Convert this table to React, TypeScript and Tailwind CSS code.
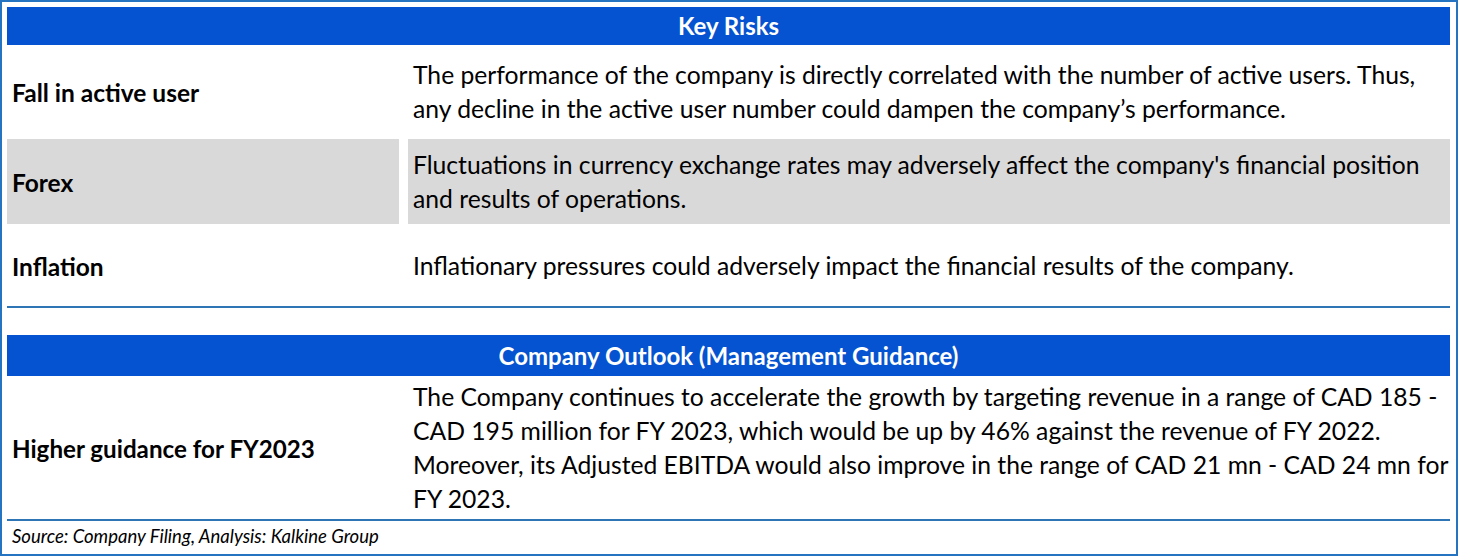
import React from "react";

const font = { fontFamily: "Lato, 'Open Sans', sans-serif" };

function Header({ title, h }: { title: string; h: string }) {
  return (
    <div className={`${h} bg-[#0553d0] text-white font-bold text-[24px] flex items-center justify-center leading-none`}>
      {title}
    </div>
  );
}

export default function App() {
  return (
    <div style={font} className="w-[1458px] h-[556px] border-2 border-[#2474c2] bg-white pt-[5px] pl-[5px] pr-[6px] pb-[1px] text-black flex flex-col">
      <Header title="Key Risks" h="h-[38px]" />
      <div className="grid grid-cols-[392px_1fr] gap-x-[9px] h-[93px]">
        <div className="flex items-center pl-[5px] pt-[3px] font-bold text-[24.5px]">Fall in active user</div>
        <div className="flex flex-col justify-center pl-[5px] pt-[1px] text-[24.7px] leading-[34px] whitespace-nowrap">
          <span>The performance of the company is directly correlated with the number of active users. Thus,</span>
          <span>any decline in the active user number could dampen the company’s performance.</span>
        </div>
      </div>
      <div className="grid grid-cols-[392px_1fr] gap-x-[9px] h-[87px] py-[1px]">
        <div className="bg-[#d9d9d9] flex items-center pl-[5px] pt-[3px] font-bold text-[24.5px]">Forex</div>
        <div className="bg-[#d9d9d9] flex flex-col justify-center pl-[5px] pt-[1px] text-[24.7px] leading-[34px] whitespace-nowrap">
          <span>Fluctuations in currency exchange rates may adversely affect the company's financial position</span>
          <span>and results of operations.</span>
        </div>
      </div>
      <div className="grid grid-cols-[392px_1fr] gap-x-[9px] h-[81px]">
        <div className="flex items-center pl-[5px] pt-[3px] font-bold text-[24.5px]">Inflation</div>
        <div className="flex flex-col justify-center pl-[5px] pt-[1px] text-[24.7px] leading-[34px] whitespace-nowrap">
          <span>Inflationary pressures could adversely impact the financial results of the company.</span>
        </div>
      </div>
      <div className="h-[2px] bg-[#2e75b6]" />
      <div className="h-[27px]" />
      <Header title="Company Outlook (Management Guidance)" h="h-[41px]" />
      <div className="grid grid-cols-[392px_1fr] gap-x-[9px] h-[143px]">
        <div className="flex items-center pl-[5px] pt-[3px] font-bold text-[24.2px]">Higher guidance for FY2023</div>
        <div className="flex flex-col justify-center pl-[5px] text-[24.7px] leading-[34px] whitespace-nowrap">
          <span>The Company continues to accelerate the growth by targeting revenue in a range of CAD 185 -</span>
          <span>CAD 195 million for FY 2023, which would be up by 46% against the revenue of FY 2022.</span>
          <span>Moreover, its Adjusted EBITDA would also improve in the range of CAD 21 mn - CAD 24 mn for</span>
          <span>FY 2023.</span>
        </div>
      </div>
      <div className="h-[2px] bg-[#2e75b6]" />
      <div className="h-[32px] flex items-center pl-[5px] italic text-[18.5px]">
        Source: Company Filing, Analysis: Kalkine Group
      </div>
    </div>
  );
}
